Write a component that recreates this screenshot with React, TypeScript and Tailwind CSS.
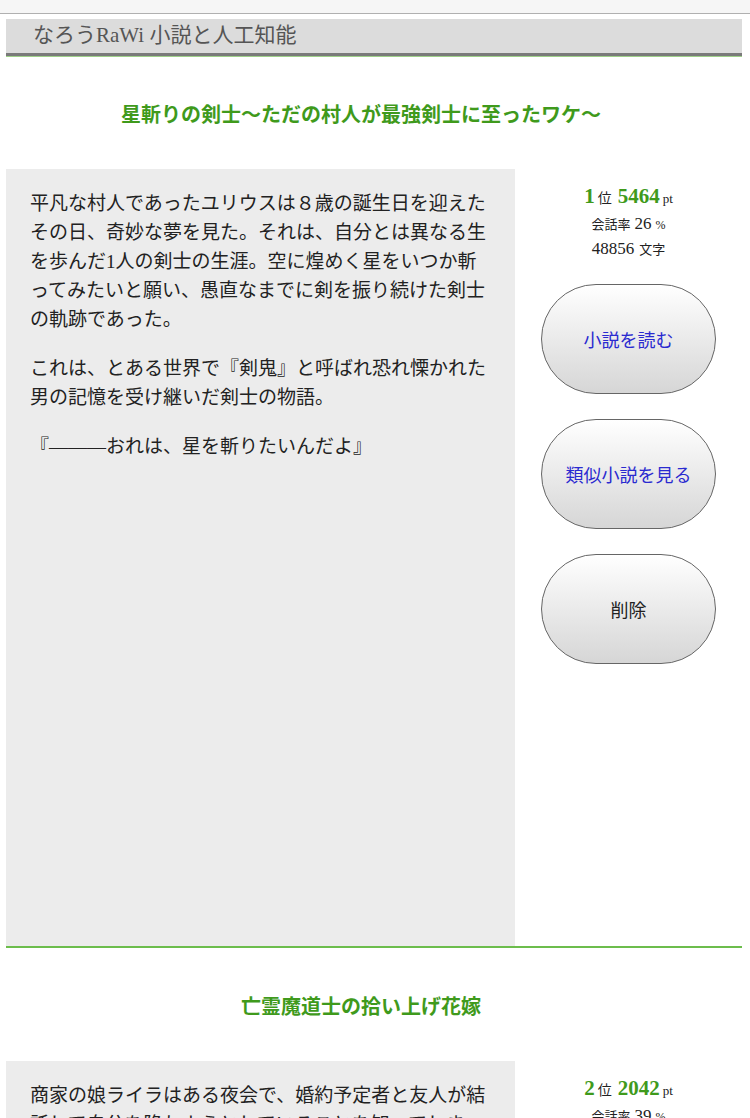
const serif = "font-['Liberation_Serif','Noto_Sans_CJK_JP',serif]";
const sans = "font-['Noto_Sans_CJK_JP','Liberation_Sans',sans-serif]";

type Novel = {
  title: string;
  rank: number;
  pt: number;
  talk: number;
  chars: number;
  story: string[];
};

const novels: Novel[] = [
  {
    title: "星斬りの剣士〜ただの村人が最強剣士に至ったワケ〜",
    rank: 1,
    pt: 5464,
    talk: 26,
    chars: 48856,
    story: [
      "平凡な村人であったユリウスは８歳の誕生日を迎えたその日、奇妙な夢を見た。それは、自分とは異なる生を歩んだ1人の剣士の生涯。空に煌めく星をいつか斬ってみたいと願い、愚直なまでに剣を振り続けた剣士の軌跡であった。",
      "これは、とある世界で『剣鬼』と呼ばれ恐れ慄かれた男の記憶を受け継いだ剣士の物語。",
      "『―――おれは、星を斬りたいんだよ』",
    ],
  },
  {
    title: "亡霊魔道士の拾い上げ花嫁",
    rank: 2,
    pt: 2042,
    talk: 39,
    chars: 61230,
    story: [
      "商家の娘ライラはある夜会で、婚約予定者と友人が結託して自分を陥れようとしていることを知ってしまう。",
    ],
  },
];

function PillButton({ label, blue }: { label: string; blue?: boolean }) {
  return (
    <button
      className={`flex h-[110px] w-[175px] items-center justify-center rounded-full border border-[#666] bg-gradient-to-b from-white to-[#d6d6d6] text-[18px] ${sans} ${
        blue ? "text-[#2a2ad0]" : "text-[#222]"
      }`}
    >
      {label}
    </button>
  );
}

function NovelBlock({ novel }: { novel: Novel }) {
  return (
    <section>
      <h2 className={`flex h-[113px] items-center justify-center pt-[4px] pr-[26px] text-[20px] font-bold text-[#3f9a1c] ${serif}`}>
        {novel.title}
      </h2>
      <div className="flex border-b-2 border-[#6cbd4c]">
        <div className="h-[777px] w-[509px] bg-[#ececec] pl-[24px] pr-[24px] pt-[20px]">
          {novel.story.map((p, i) => (
            <p key={i} className={`mb-[20px] text-[19px] leading-[29px] text-[#222] ${serif}`}>
              {p}
            </p>
          ))}
        </div>
        <div className="flex flex-1 flex-col items-center pt-[14px]">
          <div className={`flex flex-col items-center text-[#222] ${serif}`}>
            <div className="flex items-baseline gap-[3px] leading-[26px]">
              <span className="text-[21px] font-bold text-[#3f9a1c]">{novel.rank}</span>
              <span className="text-[14px]">位</span>
              <span className="ml-[3px] text-[21px] font-bold text-[#3f9a1c]">{novel.pt}</span>
              <span className="text-[13px]">pt</span>
            </div>
            <div className="flex items-baseline gap-[4px] leading-[24px]">
              <span className="text-[13px]">会話率</span>
              <span className="text-[17px]">{novel.talk}</span>
              <span className="text-[12px]">%</span>
            </div>
            <div className="flex items-baseline gap-[5px] leading-[24px]">
              <span className="text-[17px]">{novel.chars}</span>
              <span className="text-[13px]">文字</span>
            </div>
          </div>
          <div className="mt-[22px] flex flex-col gap-[25px]">
            <PillButton label="小説を読む" blue />
            <PillButton label="類似小説を見る" blue />
            <PillButton label="削除" />
          </div>
        </div>
      </div>
    </section>
  );
}

export default function App() {
  return (
    <div className="min-h-screen bg-white">
      <div className="h-[14px] border-b border-[#b0b0b0] bg-[#f6f6f6]" />
      <div className="ml-[6px] mr-[8px] mt-[5px]">
        <header className="flex h-[37px] items-center border-b-[3px] border-[#7a7a7a] bg-[#dcdcdc] pl-[27px] shadow-[0_1px_0_#9fd08a]">
          <span className={`text-[21px] text-[#555] ${serif}`}>なろうRaWi 小説と人工知能</span>
        </header>
        {novels.map((n) => (
          <NovelBlock key={n.title} novel={n} />
        ))}
      </div>
    </div>
  );
}
